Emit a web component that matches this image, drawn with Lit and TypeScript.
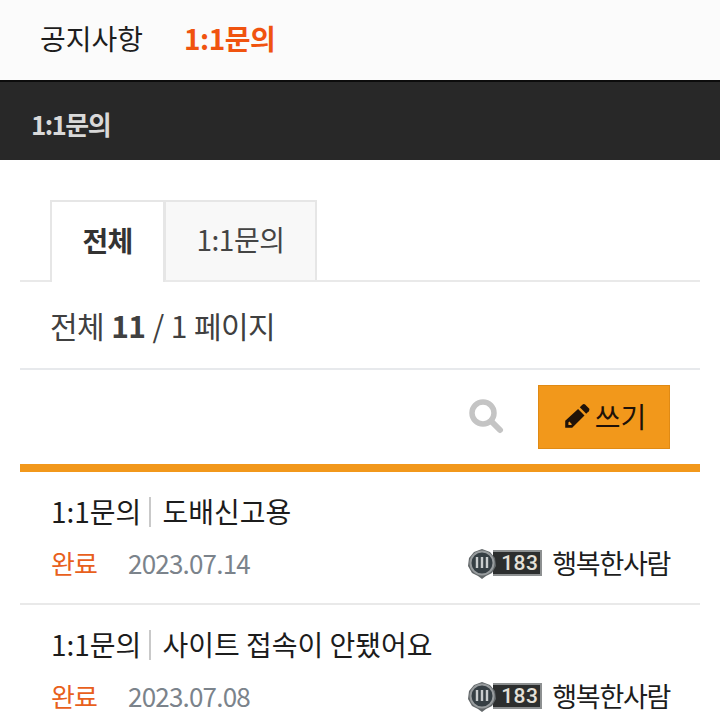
import { LitElement, html, css, svg } from "lit";
import { customElement } from "lit/decorators.js";

const items = [
  { title: "도배신고용", date: "2023.07.14" },
  { title: "사이트 접속이 안됐어요", date: "2023.07.08" },
];

const medal = svg`<svg class="medal" viewBox="0 0 30 32" width="30" height="32">
  <path d="M15 1 L23 4 L28 10 L29 18 L25 25 L19 28 L15 31 L11 28 L5 25 L1 18 L2 10 L7 4 Z" fill="#63686a"/>
  <circle cx="15" cy="15" r="11.5" fill="#363f44" stroke="#989c9e" stroke-width="2"/>
  <path d="M10 9v11M15 9v11M20 9v11" stroke="#c9cccd" stroke-width="2.4"/>
</svg>`;

@customElement("app-root")
export class AppRoot extends LitElement {
  static styles = css`
    :host { display: block; width: 720px; height: 720px; overflow: hidden; background: #fff;
      font-family: "Noto Sans CJK KR", "Noto Sans", sans-serif; color: #222; }
    .nav { height: 80px; box-sizing: border-box; background: #fbfbfb; display: flex; align-items: center;
      gap: 41px; padding: 0 40px 4px; font-size: 28px; letter-spacing: 0; color: #1d1d1d; }
    .nav .on { color: #f0530f; font-weight: 700; letter-spacing: -0.5px; }
    .head { height: 80px; box-sizing: border-box; background: #282828; border-top: 2px solid #0c0c0c;
      display: flex; align-items: center; padding: 4px 31px 0; font-size: 26px; font-weight: 700;
      letter-spacing: -1.6px; color: #d9d9d9; }
    .body { padding: 40px 20px 0; }
    .tabs { display: flex; height: 82px; padding-left: 30px; border-bottom: 2px solid #e9e9e9; box-sizing: border-box; }
    .tab { box-sizing: border-box; height: 82px; display: flex; align-items: center; justify-content: center;
      border: 2px solid #e6e6e6; font-size: 28px; padding-bottom: 4px; }
    .tab.a { width: 115px; border-bottom: none; background: #fff; font-weight: 700; color: #333; letter-spacing: -0.8px; }
    .tab.b { width: 153px; margin-left: -1px; background: #f8f8f8; color: #444; height: 80px; border-bottom: none; letter-spacing: -0.5px; }
    .count { height: 88px; box-sizing: border-box; display: flex; align-items: center; padding: 0 30px 0;
      border-bottom: 2px solid #e7e9ec; font-size: 30px; color: #404040; letter-spacing: -0.6px; word-spacing: 1px; }
    .count b { font-weight: 700; }
    .tools { height: 102px; box-sizing: border-box; display: flex; align-items: flex-start; justify-content: flex-end;
      gap: 34px; padding: 15px 30px 0 0; border-bottom: 8px solid #f2981b; }
    .search { margin-top: 14px; display: block; }
    .write { box-sizing: border-box; width: 132px; height: 64px; background: #f2981b; border: 1px solid #e08a14;
      display: flex; align-items: center; justify-content: center; gap: 3px; font-size: 28px; color: #201208; padding-bottom: 3px; }
    .item { height: 133px; box-sizing: border-box; border-bottom: 2px solid #e9e9e9; padding: 17px 30px 0 31px; }
    .title { display: flex; align-items: center; height: 44px; font-size: 28px; color: #1c1c1c; letter-spacing: 0; }
    .sep { width: 2px; height: 30px; background: #c9c9c9; margin: 2px 11px 0 8px; }
    .meta { display: flex; align-items: center; height: 44px; margin-top: 7px; }
    .done { font-size: 26px; color: #e8601c; width: 77px; letter-spacing: -0.8px; }
    .date { font-size: 26px; color: #7b838b; letter-spacing: -0.8px; flex: 1; }
    .user { display: flex; align-items: center; font-size: 27px; color: #1d1d1d; letter-spacing: -1.3px; }
    .medal { display: block; margin-right: -4px; position: relative; z-index: 1; margin-top: 3px; }
    .lv { box-sizing: border-box; width: 49px; height: 26px; margin-right: 10px; margin-top: 1px; background: #2c2e2e;
      border: 2px solid #8d9091; border-left: none; display: flex; align-items: center; justify-content: flex-end;
      padding-right: 2px; font-family: "Roboto", sans-serif; font-size: 21px; font-weight: 500; color: #e4e0d8; letter-spacing: 0.4px; }
  `;

  render() {
    return html`
      <div class="nav"><span>공지사항</span><span class="on">1:1문의</span></div>
      <div class="head">1:1문의</div>
      <div class="body">
        <div class="tabs">
          <div class="tab a">전체</div>
          <div class="tab b">1:1문의</div>
        </div>
        <div class="count"><span>전체 <b>11</b> / 1 페이지</span></div>
        <div class="tools">
          <svg class="search" width="36" height="36" viewBox="0 0 36 36" fill="none" stroke="#c4c4c4">
            <circle cx="15" cy="14" r="11" stroke-width="5.5"/>
            <path d="M23 22 L32 31" stroke-width="6" stroke-linecap="round"/>
          </svg>
          <div class="write">
            <svg width="30" height="30" viewBox="0 0 28 28" fill="#201208">
              <path d="M19 3.500 a2 2 0 0 1 2.800 0 l3.200 3.200 a2 2 0 0 1 0 2.800 l-2.400 2.400 -6-6 Z"/>
              <path d="M15 7.500 l6 6 L9.500 25 H3 v-6.500 Z M6 20 v2.500 h2.500 l0.800 -0.800 -2.500 -2.500 Z"/>
            </svg>
            <span>쓰기</span>
          </div>
        </div>
        ${items.map(
          (i) => html`
            <div class="item">
              <div class="title"><span>1:1문의</span><span class="sep"></span><span>${i.title}</span></div>
              <div class="meta">
                <span class="done">완료</span>
                <span class="date">${i.date}</span>
                <span class="user">${medal}<span class="lv">183</span>행복한사람</span>
              </div>
            </div>
          `
        )}
      </div>
    `;
  }
}
